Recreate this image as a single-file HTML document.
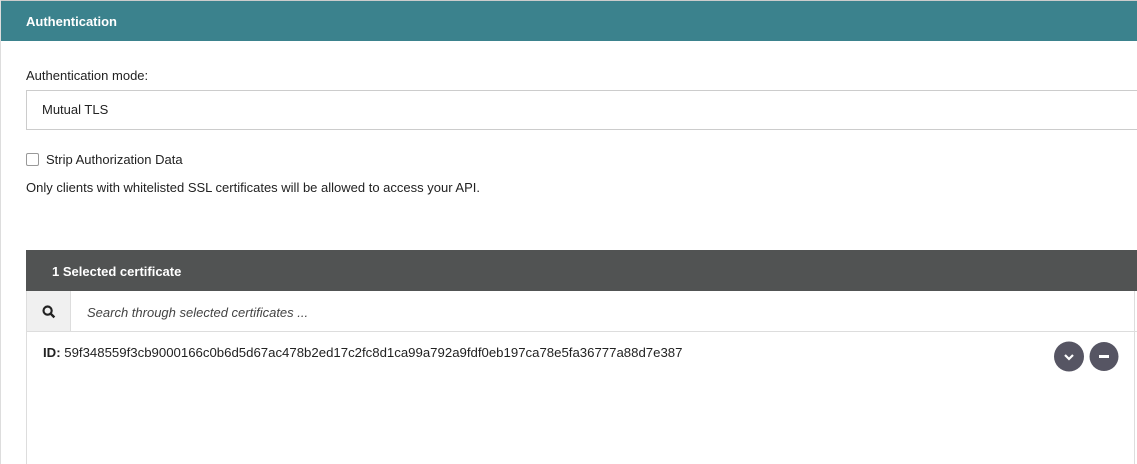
<!DOCTYPE html>
<html><head><style>
body{margin:0;width:1137px;height:464px;overflow:hidden;background:#fff;font-family:"Liberation Sans",sans-serif;color:#222;position:relative}
.a{position:absolute}
</style></head><body>
<div class="a" style="left:0;top:0;width:1137px;height:1px;background:#ccc"></div>
<div class="a" style="left:0;top:0;width:1px;height:464px;background:#ddd"></div>
<div class="a" style="left:1px;top:1px;width:1136px;height:40px;background:#3b828d;color:#fff;font-weight:bold;font-size:13px;line-height:42px;text-indent:25px">Authentication</div>
<div class="a" style="left:26px;top:68px;font-size:13px">Authentication mode:</div>
<div class="a" style="left:26px;top:90px;width:1120px;height:38px;border:1px solid #ccc;font-size:13px;line-height:38px;text-indent:15px">Mutual TLS</div>
<div class="a" style="left:26px;top:153px;width:11px;height:11px;border:1px solid #999;border-radius:2px"></div>
<div class="a" style="left:46px;top:152px;font-size:13px">Strip Authorization Data</div>
<div class="a" style="left:26px;top:180px;font-size:13px">Only clients with whitelisted SSL certificates will be allowed to access your API.</div>
<div class="a" style="left:26px;top:250px;width:1120px;height:214px;border-left:1px solid #ddd"></div>
<div class="a" style="left:1134px;top:291px;width:1px;height:173px;background:#ddd"></div>
<div class="a" style="left:26px;top:250px;width:1111px;height:41px;background:#515353;color:#fff;font-weight:bold;font-size:13px;line-height:43px;text-indent:26px">1 Selected certificate</div>
<div class="a" style="left:27px;top:291px;width:43px;height:40px;background:#f0f0f0;border-right:1px solid #ddd"></div>
<svg class="a" style="left:42px;top:305px" width="14" height="14" viewBox="0 0 13 13"><circle cx="5.2" cy="5.2" r="3.8" fill="none" stroke="#222" stroke-width="2"/><path d="M8 8l3.5 3.5" stroke="#222" stroke-width="2.2"/></svg>
<div class="a" style="left:87px;top:305px;font-size:13px;font-style:italic;color:#444">Search through selected certificates ...</div>
<div class="a" style="left:26px;top:331px;width:1111px;height:1px;background:#ddd"></div>
<div class="a" style="left:43px;top:345px;font-size:13.2px"><b>ID:</b> 59f348559f3cb9000166c0b6d5d67ac478b2ed17c2fc8d1ca99a792a9fdf0eb197ca78e5fa36777a88d7e387</div>
<svg class="a" style="left:1053px;top:341px" width="70" height="31"><circle cx="16" cy="15.5" r="15" fill="#565563"/><path d="M12 14l4 4 4-4" stroke="#fff" stroke-width="2.2" fill="none"/><circle cx="51" cy="15.5" r="14.5" fill="#565563"/><rect x="46" y="14" width="10" height="3" fill="#fff"/></svg>
</body></html>
